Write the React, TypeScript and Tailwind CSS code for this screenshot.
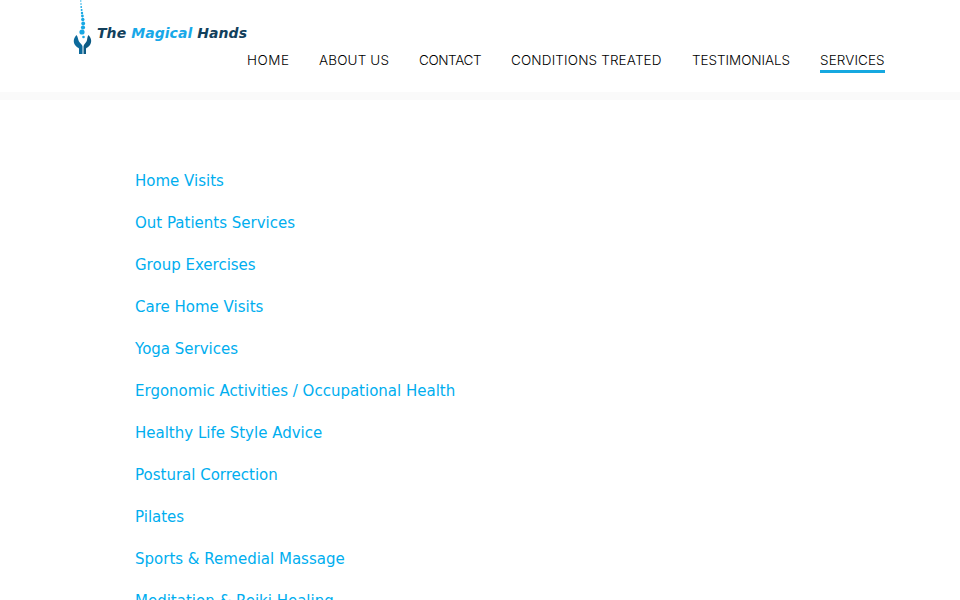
const nav = [
  { label: "HOME", w: "w-[42px]", t: "tracking-[0.55px]" },
  { label: "ABOUT US", w: "w-[70px]", t: "tracking-[0.15px]" },
  { label: "CONTACT", w: "w-[62px]", t: "tracking-[-0.4px]" },
  { label: "CONDITIONS TREATED", w: "w-[151px]", t: "tracking-[0.15px]" },
  { label: "TESTIMONIALS", w: "w-[98px]", t: "tracking-[-0.05px]" },
  { label: "SERVICES", w: "w-[65px]", t: "tracking-[0.1px]", active: true },
];

const items = [
  "Home Visits",
  "Out Patients Services",
  "Group Exercises",
  "Care Home Visits",
  "Yoga Services",
  "Ergonomic Activities / Occupational Health",
  "Healthy Life Style Advice",
  "Postural Correction",
  "Pilates",
  "Sports & Remedial Massage",
  "Meditation & Reiki Healing",
];

function Mark() {
  return (
    <svg width="20" height="56" viewBox="0 0 20 56" className="shrink-0">
      {[
        [7.8, 1, 0.7],
        [8, 4, 0.8],
        [8.2, 7, 0.9],
        [8.6, 10, 1],
        [9, 13, 1.2],
        [9.4, 16, 1.4],
        [9.8, 19.5, 1.7],
        [10.2, 23.5, 1.9],
        [10, 27.5, 2.1],
        [9, 32, 2.6],
      ].map(([cx, cy, r], i) => (
        <circle key={i} cx={cx} cy={cy} r={r} fill="#18a8e4" />
      ))}
      <circle cx="10.5" cy="37" r="1.3" fill="#18a8e4" />
      <path d="M3.5 35 C0.5 38 0 42 2 45 C3.5 47 5 47.5 6 48.5 L6 54 L9.5 54 L9.5 46.5 C9.5 44.5 7 43.5 6 41.5 C5 39.5 5 37 3.5 35 Z" fill="#0c6a9c" />
      <path d="M15.5 35 C18.5 38 19 42 17 45 C15.5 47 14 47.5 13 48.5 L13 54 L10.5 54 L10.5 46.5 C10.5 44.5 12.5 43.5 13.5 41.5 C14.5 39.5 14 37 15.5 35 Z" fill="#0c5a84" />
    </svg>
  );
}

export default function App() {
  return (
    <div className="h-[600px] w-[960px] overflow-hidden bg-white font-['DejaVu_Sans',sans-serif]">
      <header className="flex h-[92px] items-start bg-white pl-[73px] pr-[75px]">
        <div className="flex w-[174px] shrink-0 items-start">
          <Mark />
          <span className="mt-[24px] ml-[4px] whitespace-nowrap font-['DejaVu_Sans',sans-serif] text-[14px] font-bold italic leading-[18px] tracking-[0.06px] text-[#12405c]">
            The <span className="text-[#18a8e8]">Magical</span> Hands
          </span>
        </div>
        <nav className="mt-[50px] flex flex-1 justify-between">
          {nav.map((n) => (
            <a
              key={n.label}
              className={`${n.w} ${n.t} block h-[23px] whitespace-nowrap font-['Inter',sans-serif] text-[13.5px] font-light leading-[21px] text-[#000000] ${
                n.active ? "border-b-[3px] border-[#16a8e0]" : ""
              }`}
            >
              {n.label}
            </a>
          ))}
        </nav>
      </header>
      <div className="h-[8px] bg-[#fafafa]" />
      <ul className="mt-[69px] flex flex-col gap-[18px] pl-[135px]">
        {items.map((t) => (
          <li key={t} className="text-[15px] leading-[24px] text-[#00aeef]">
            {t}
          </li>
        ))}
      </ul>
    </div>
  );
}
